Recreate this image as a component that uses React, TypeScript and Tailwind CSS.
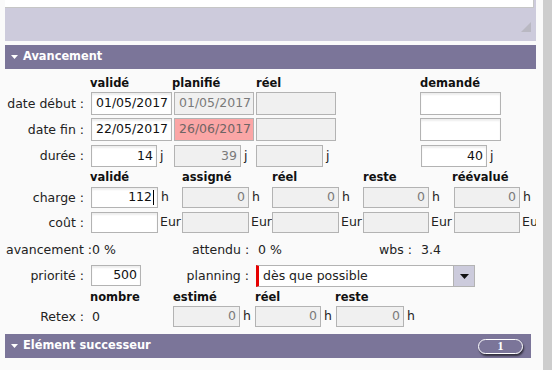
import React from "react";

type BoxProps = {
  w: string;
  h?: string;
  children?: React.ReactNode;
  ro?: boolean;
  red?: boolean;
  left?: boolean;
  caret?: boolean;
};

function Box({ w, h = "h-[21px]", children, ro, red, left, caret }: BoxProps) {
  const bg = red
    ? "bg-[#fba6a6] text-[#6f6464]"
    : ro
    ? "bg-[#f0f0f0] text-[#7a7a7a]"
    : "bg-white text-[#111] shadow-[inset_0_2px_2px_rgba(0,0,0,0.07)]";
  return (
    <div
      className={`${w} ${h} box-border border border-[#b3b3b3] flex items-center ${
        left ? "justify-start pl-[4px]" : "justify-end pr-[3px]"
      } ${bg} text-[12.5px] leading-none overflow-hidden whitespace-nowrap shrink-0`}
    >
      {children}
      {caret && <span className="w-px h-[15px] bg-black ml-px" />}
    </div>
  );
}

function Bar({ title, w, badge }: { title: string; w: string; badge?: string }) {
  return (
    <div className={`ml-[5px] ${w} h-[24px] bg-[#7b7599] flex items-center justify-between shrink-0`}>
      <div className="flex items-center">
        <svg width="7" height="4" viewBox="0 0 7 4" className="ml-[6px] mr-[5px]">
          <path d="M0 0 L7 0 L3.5 4 Z" fill="#ffffff" />
        </svg>
        <span className="text-white font-bold text-[11.4px] leading-none">{title}</span>
      </div>
      {badge && (
        <div className="mr-[8px] w-[45px] h-[15px] rounded-full border-[1.5px] border-white shadow-[1px_2px_2px_rgba(0,0,0,0.6)] flex items-center justify-center box-border">
          <span className="text-white font-bold text-[12px] leading-none font-['Liberation_Serif',serif]">{badge}</span>
        </div>
      )}
    </div>
  );
}

const H = "font-bold text-[11.5px] leading-[14px] text-[#111]";
const L = "text-right pr-[7px] whitespace-nowrap shrink-0";

export default function App() {
  return (
    <div className="flex w-[552px] h-[370px] overflow-hidden font-['DejaVu_Sans',Verdana,sans-serif] text-[12.5px] text-[#222] bg-[#fafafa]">
      <div className="w-[543px] h-[370px] flex flex-col shrink-0 overflow-hidden">
        {/* top block */}
        <div className="ml-[5px] w-[531px] h-[41px] bg-[#cdcbdc] relative shrink-0">
          <div className="w-[529px] h-[8px] bg-white border-b border-r border-[#c6c6c6] box-border" />
          <svg width="10" height="10" viewBox="0 0 10 10" className="absolute right-[5px] top-[22px]">
            <path d="M10 0 L10 10 L0 10 Z" fill="#b9b8c2" />
          </svg>
        </div>
        <div className="h-[4px] shrink-0" />
        <Bar title="Avancement" w="w-[531px]" />

        <div className="w-[536px] overflow-hidden shrink-0">
          {/* header row 1 */}
          <div className="flex h-[23px] pt-[7px]">
            <div className="w-[90px] shrink-0" />
            <div className={`w-[82px] shrink-0 ${H}`}>validé</div>
            <div className={`w-[84px] shrink-0 ${H}`}>planifié</div>
            <div className={`w-[164px] shrink-0 ${H}`}>réel</div>
            <div className={`${H}`}>demandé</div>
          </div>
          {/* date début */}
          <div className="flex h-[26px]">
            <div className={`w-[91px] leading-[23px] ${L}`}>date début :</div>
            <div className="w-[83px] shrink-0">
              <Box w="w-[81px]" h="h-[23px]" left>01/05/2017</Box>
            </div>
            <div className="w-[82px] shrink-0">
              <Box w="w-[80px]" h="h-[23px]" ro left>01/05/2017</Box>
            </div>
            <div className="w-[164px] shrink-0">
              <Box w="w-[80px]" h="h-[23px]" ro />
            </div>
            <Box w="w-[81px]" h="h-[23px]" />
          </div>
          {/* date fin */}
          <div className="flex h-[27px]">
            <div className={`w-[91px] leading-[23px] ${L}`}>date fin :</div>
            <div className="w-[83px] shrink-0">
              <Box w="w-[81px]" h="h-[23px]" left>22/05/2017</Box>
            </div>
            <div className="w-[82px] shrink-0">
              <Box w="w-[80px]" h="h-[23px]" red left>26/06/2017</Box>
            </div>
            <div className="w-[164px] shrink-0">
              <Box w="w-[80px]" h="h-[23px]" ro />
            </div>
            <Box w="w-[81px]" h="h-[23px]" />
          </div>
          {/* durée */}
          <div className="flex h-[25px]">
            <div className={`w-[91px] leading-[22px] ${L}`}>durée :</div>
            <div className="w-[83px] shrink-0 flex items-center h-[22px]">
              <Box w="w-[66px]" h="h-[22px]">14</Box>
              <span className="ml-[3px]">j</span>
            </div>
            <div className="w-[82px] shrink-0 flex items-center h-[22px]">
              <Box w="w-[67px]" h="h-[22px]" ro>39</Box>
              <span className="ml-[3px]">j</span>
            </div>
            <div className="w-[165px] shrink-0 flex items-center h-[22px]">
              <Box w="w-[67px]" h="h-[22px]" ro />
              <span className="ml-[3px]">j</span>
            </div>
            <div className="flex items-center h-[22px]">
              <Box w="w-[66px]" h="h-[22px]">40</Box>
              <span className="ml-[3px]">j</span>
            </div>
          </div>
          {/* header row 2 */}
          <div className="flex h-[17px]">
            <div className="w-[90px] shrink-0" />
            <div className={`w-[92px] shrink-0 ${H}`}>validé</div>
            <div className={`w-[90px] shrink-0 ${H}`}>assigné</div>
            <div className={`w-[91px] shrink-0 ${H}`}>réel</div>
            <div className={`w-[89px] shrink-0 ${H}`}>reste</div>
            <div className={`${H}`}>réévalué</div>
          </div>
          {/* charge */}
          <div className="flex h-[25px]">
            <div className={`w-[91px] leading-[21px] ${L}`}>charge :</div>
            <div className="w-[91px] shrink-0 flex items-center h-[21px]">
              <Box w="w-[67px]" caret>112</Box>
              <span className="ml-[3px]">h</span>
            </div>
            <div className="w-[90px] shrink-0 flex items-center h-[21px]">
              <Box w="w-[67px]" ro>0</Box>
              <span className="ml-[3px]">h</span>
            </div>
            <div className="w-[91px] shrink-0 flex items-center h-[21px]">
              <Box w="w-[67px]" ro>0</Box>
              <span className="ml-[3px]">h</span>
            </div>
            <div className="w-[91px] shrink-0 flex items-center h-[21px]">
              <Box w="w-[66px]" ro>0</Box>
              <span className="ml-[3px]">h</span>
            </div>
            <div className="shrink-0 flex items-center h-[21px]">
              <Box w="w-[66px]" ro>0</Box>
              <span className="ml-[3px]">h</span>
            </div>
          </div>
          {/* coût */}
          <div className="flex h-[25px]">
            <div className={`w-[91px] leading-[21px] ${L}`}>coût :</div>
            <div className="w-[91px] shrink-0 flex items-center h-[21px]">
              <Box w="w-[67px]" />
              <span className="ml-[2px]">Eur</span>
            </div>
            <div className="w-[90px] shrink-0 flex items-center h-[21px]">
              <Box w="w-[67px]" ro />
              <span className="ml-[2px]">Eur</span>
            </div>
            <div className="w-[91px] shrink-0 flex items-center h-[21px]">
              <Box w="w-[67px]" ro />
              <span className="ml-[2px]">Eur</span>
            </div>
            <div className="w-[91px] shrink-0 flex items-center h-[21px]">
              <Box w="w-[66px]" ro />
              <span className="ml-[2px]">Eur</span>
            </div>
            <div className="shrink-0 flex items-center h-[21px] whitespace-nowrap">
              <Box w="w-[66px]" ro />
              <span className="ml-[2px]">Eur</span>
            </div>
          </div>
          {/* avancement */}
          <div className="flex h-[28px] pt-[5px] leading-[16px] whitespace-nowrap">
            <div className="w-[92px] shrink-0 pl-[6px]">avancement :</div>
            <div className="w-[100px] shrink-0">0 %</div>
            <div className="w-[66px] shrink-0">attendu :</div>
            <div className="w-[121px] shrink-0">0 %</div>
            <div className="w-[42px] shrink-0">wbs :</div>
            <div>3.4</div>
          </div>
          {/* priorité */}
          <div className="flex h-[24px]">
            <div className={`w-[91px] leading-[21px] ${L}`}>priorité :</div>
            <Box w="w-[50px]">500</Box>
            <div className={`w-[115px] leading-[21px] ${L}`}>planning :</div>
            <div className="w-[219px] h-[22px] box-border border border-[#b3b3b3] border-l-[3px] border-l-[#e60000] bg-white flex items-center shrink-0">
              <span className="flex-1 pl-[4px] leading-none whitespace-nowrap">dès que possible</span>
              <div className="w-[21px] h-full bg-[#cccbdc] border-l border-[#b3b3b3] flex items-center justify-center">
                <svg width="9" height="5" viewBox="0 0 9 5">
                  <path d="M0 0 L9 0 L4.5 5 Z" fill="#111" />
                </svg>
              </div>
            </div>
          </div>
          {/* header row 3 */}
          <div className="flex h-[17px] pt-[1px]">
            <div className="w-[90px] shrink-0" />
            <div className={`w-[83px] shrink-0 ${H}`}>nombre</div>
            <div className={`w-[82px] shrink-0 ${H}`}>estimé</div>
            <div className={`w-[80px] shrink-0 ${H}`}>réel</div>
            <div className={`${H}`}>reste</div>
          </div>
          {/* Retex */}
          <div className="flex h-[28px]">
            <div className={`w-[91px] leading-[21px] ${L}`}>Retex :</div>
            <div className="w-[82px] shrink-0 leading-[21px] pl-[1px]">0</div>
            <div className="w-[82px] shrink-0 flex items-center h-[21px]">
              <Box w="w-[67px]" ro>0</Box>
              <span className="ml-[3px]">h</span>
            </div>
            <div className="w-[81px] shrink-0 flex items-center h-[21px]">
              <Box w="w-[66px]" ro>0</Box>
              <span className="ml-[3px]">h</span>
            </div>
            <div className="shrink-0 flex items-center h-[21px]">
              <Box w="w-[68px]" ro>0</Box>
              <span className="ml-[3px]">h</span>
            </div>
          </div>
        </div>

        <Bar title="Elément successeur" w="w-[526px]" badge="1" />
      </div>
      <div className="w-[9px] h-[370px] bg-[#cdcdcd] shrink-0" />
    </div>
  );
}
